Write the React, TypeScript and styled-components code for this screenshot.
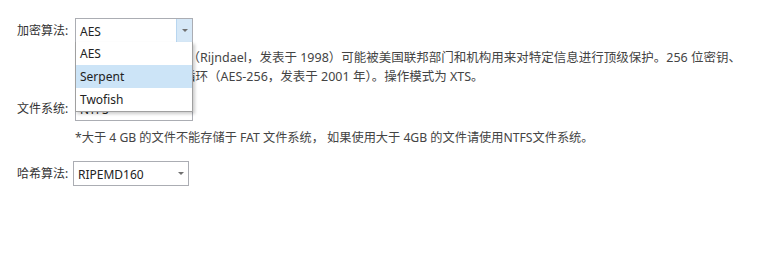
import React from 'react'
import styled, { createGlobalStyle } from 'styled-components'

const GlobalStyle = createGlobalStyle`
    html, body {
        margin: 0;
        padding: 0;
        background: #ffffff;
    }
    body {
        font-family: 'Noto Sans', 'Noto Sans CJK SC', sans-serif;
        font-size: 12px;
        color: #333333;
    }
`

const Page = styled.div`
    display: flex;
    flex-direction: column;
    padding: 18px 0 0 17px;
    width: 775px;
    height: 258px;
    box-sizing: border-box;
`

const Row = styled.div<{ $gap?: number }>`
    display: flex;
    align-items: center;
    margin-top: ${(p) => p.$gap ?? 0}px;
`

const Label = styled.label<{ $width: number }>`
    width: ${(p) => p.$width}px;
    flex: none;
    line-height: 16px;
    color: #333333;
`

const Note = styled.p<{ $gap: number; $size: number }>`
    margin: ${(p) => p.$gap}px 0 0 58px;
    font-size: ${(p) => p.$size}px;
    line-height: 19px;
    color: #444444;
    white-space: nowrap;
`

const SelectBox = styled.div<{ $width: number; $height: number }>`
    position: relative;
    display: flex;
    align-items: center;
    width: ${(p) => p.$width}px;
    height: ${(p) => p.$height}px;
    box-sizing: border-box;
    border: 1px solid #abadb3;
    background: #ffffff;
`

const Value = styled.span`
    flex: 1;
    padding: 1px 0 0 4px;
    color: #222222;
`

const ArrowButton = styled.span<{ $open?: boolean }>`
    display: flex;
    align-items: center;
    justify-content: center;
    width: 15px;
    align-self: stretch;
    background: ${(p) => (p.$open ? '#d6e8f7' : 'transparent')};
    border-left: 1px solid ${(p) => (p.$open ? '#b8d6f0' : 'transparent')};
`

const Arrow = styled.span`
    width: 0;
    height: 0;
    border-left: 3px solid transparent;
    border-right: 3px solid transparent;
    border-top: 3px solid #707070;
`

const Menu = styled.ul`
    position: absolute;
    top: 100%;
    left: -1px;
    z-index: 2;
    width: 118px;
    margin: 0;
    padding: 0;
    list-style: none;
    box-sizing: border-box;
    border: 1px solid #a0a0a0;
    border-top: none;
    background: #ffffff;
    box-shadow: 2px 2px 3px rgba(0, 0, 0, 0.2);
`

const MenuItem = styled.li<{ $active?: boolean }>`
    height: 23px;
    line-height: 23px;
    padding-left: 4px;
    color: #222222;
    background: ${(p) => (p.$active ? '#cce4f7' : '#ffffff')};
`

const Select = ({
    value,
    width,
    height,
    open,
    options,
    active,
}: {
    value: string
    width: number
    height: number
    open?: boolean
    options?: string[]
    active?: string
}) => (
    <SelectBox $width={width} $height={height}>
        <Value>{value}</Value>
        <ArrowButton $open={open}>
            <Arrow />
        </ArrowButton>
        {open && options && (
            <Menu>
                {options.map((o) => (
                    <MenuItem key={o} $active={o === active}>
                        {o}
                    </MenuItem>
                ))}
            </Menu>
        )}
    </SelectBox>
)

export default function App() {
    return (
        <Page>
            <GlobalStyle />
            <Row>
                <Label $width={58}>加密算法:</Label>
                <Select
                    value="AES"
                    width={118}
                    height={25}
                    open
                    options={['AES', 'Serpent', 'Twofish']}
                    active="Serpent"
                />
            </Row>
            <Note $gap={5} $size={12.5}>
                美国认可的加密标准（Rijndael，发表于 1998）可能被美国联邦部门和机构用来对特定信息进行顶级保护。256 位密钥、
                <br />
                128 位块、共 14 个循环（AES-256，发表于 2001 年）。操作模式为 XTS。
            </Note>
            <Row $gap={11}>
                <Label $width={58}>文件系统:</Label>
                <Select value="NTFS" width={118} height={24} />
            </Row>
            <Note $gap={7} $size={12.2}>
                *大于 4 GB 的文件不能存储于 FAT 文件系统， 如果使用大于 4GB 的文件请使用NTFS文件系统。
            </Note>
            <Row $gap={14}>
                <Label $width={56}>哈希算法:</Label>
                <Select value="RIPEMD160" width={116} height={25} />
            </Row>
        </Page>
    )
}
